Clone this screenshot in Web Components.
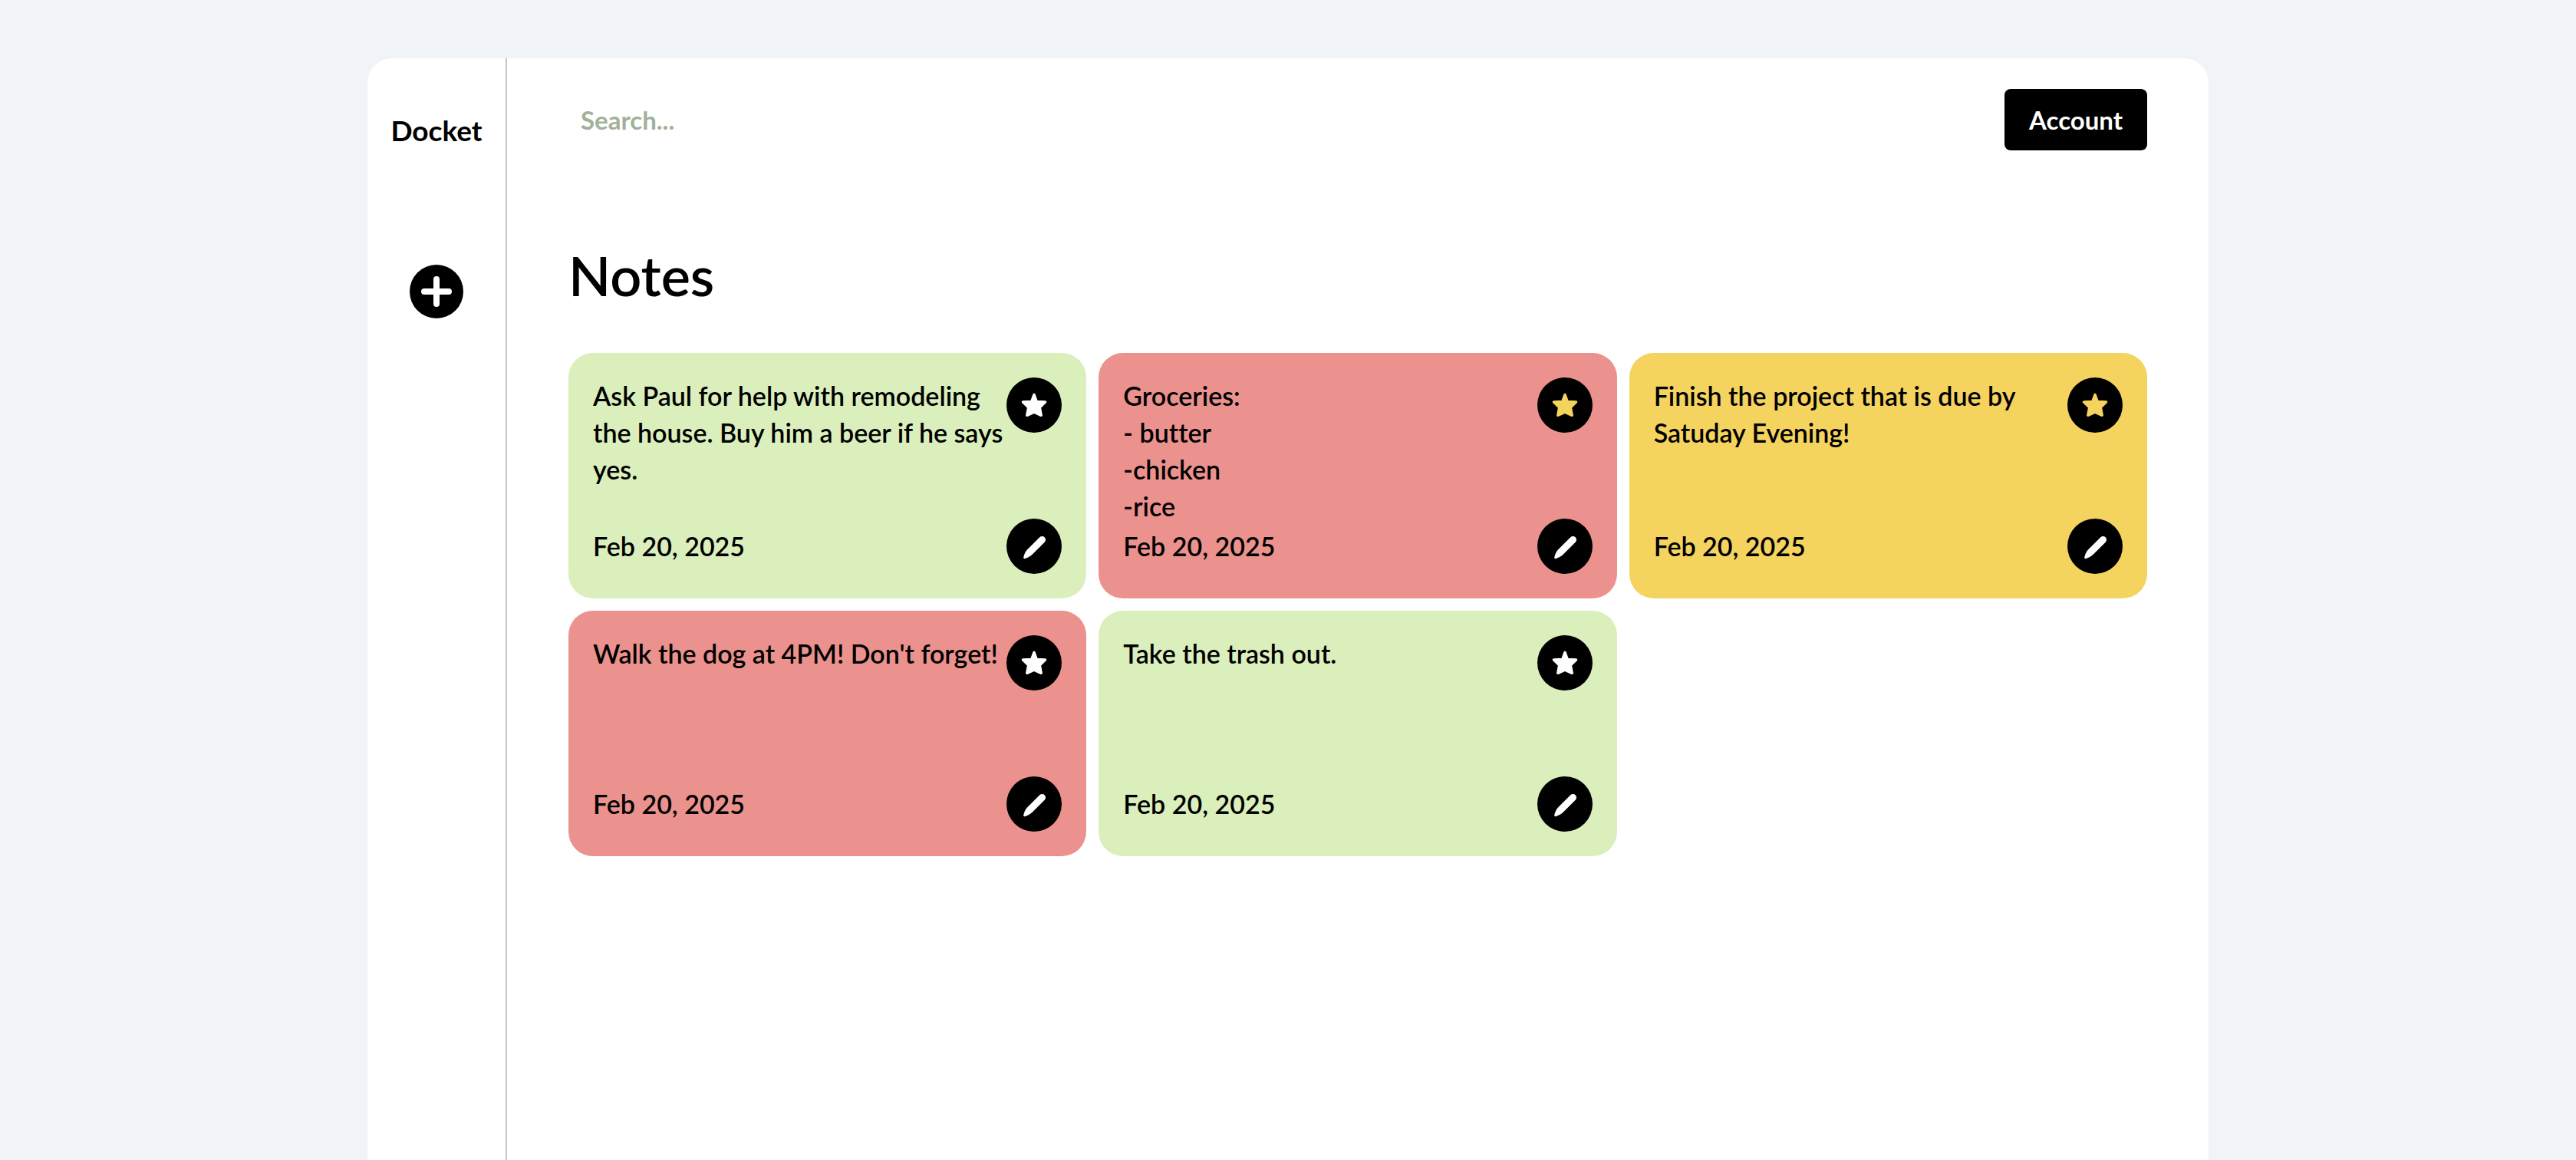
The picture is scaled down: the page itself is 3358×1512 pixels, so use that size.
<!DOCTYPE html>
<html lang="en">
<head>
<meta charset="utf-8">
<title>Docket</title>
<style>
  body { margin: 0; background: #f0f4f9; color: #000; font: 600 34px/48px Lato, "Open Sans", sans-serif; font-variant-ligatures: none; }
</style>
</head>
<body>
<docket-app>
  <docket-sidebar slot="sidebar">Docket</docket-sidebar>
  <docket-toolbar slot="toolbar">Account</docket-toolbar>
  <span slot="title">Notes</span>
  <docket-note color="green" date="Feb 20, 2025">Ask Paul for help with remodeling the house. Buy him a beer if he says yes.</docket-note>
  <docket-note color="red" date="Feb 20, 2025" starred>Groceries:
- butter
-chicken
-rice</docket-note>
  <docket-note color="yellow" date="Feb 20, 2025" starred>Finish the project that is due by Satuday Evening!</docket-note>
  <docket-note color="red" date="Feb 20, 2025">Walk the dog at 4PM! Don't forget!</docket-note>
  <docket-note color="green" date="Feb 20, 2025">Take the trash out.</docket-note>
</docket-app>

<script>
class DocketElement extends HTMLElement {
  constructor() {
    super();
    this.attachShadow({ mode: "open" }).innerHTML = this.constructor.markup;
  }
}

customElements.define("docket-app", class extends DocketElement {
  static markup = `
    <style>
      :host { display: flex; justify-content: center; padding-top: 76px; }
      .panel { display: flex; flex: 0 1 2400px; min-width: 0; min-height: calc(100vh - 76px); background: #fff; border-radius: 32px 32px 0 0; }
      main { flex: 1; min-width: 0; padding: 40px 80px 80px; }
      h1 { margin: 108px 0 48px; font-size: 72px; line-height: 108px; font-weight: 600; }
      .notes { display: grid; grid-template-columns: repeat(3, minmax(0, 1fr)); gap: 16px; }
    </style>
    <div class="panel">
      <slot name="sidebar"></slot>
      <main>
        <slot name="toolbar"></slot>
        <h1><slot name="title"></slot></h1>
        <section class="notes"><slot></slot></section>
      </main>
    </div>`;
});

customElements.define("docket-sidebar", class extends DocketElement {
  static markup = `
    <style>
      :host { display: flex; flex-direction: column; align-items: center; gap: 145px; box-sizing: border-box; flex: 0 0 182px; padding-top: 64px; border-right: 2px solid #c6c6c6; }
      .brand { font-size: 37px; line-height: 60px; font-weight: 700; }
      button { display: block; padding: 0; border: 0; background: none; cursor: pointer; }
      svg { display: block; width: 70px; height: 70px; }
    </style>
    <div class="brand"><slot></slot></div>
    <button type="button" aria-label="Add note">
      <svg viewBox="0 0 70 70"><circle cx="35" cy="35" r="35"/><path d="M35 19v32M19 35h32" stroke="#fff" stroke-width="8" stroke-linecap="round"/></svg>
    </button>`;
});

customElements.define("docket-toolbar", class extends DocketElement {
  static markup = `
    <style>
      :host { display: flex; justify-content: space-between; align-items: center; gap: 32px; font-size: 33px; font-weight: 700; }
      input { flex: 1; min-width: 0; height: 80px; box-sizing: border-box; padding: 0 16px; border: 0; outline: 0; background: none; font: inherit; color: #000; }
      input::placeholder { color: #a3b09a; opacity: 1; }
      button { height: 80px; padding: 0 32px; border: 0; border-radius: 8px; background: #000; color: #fff; font: inherit; cursor: pointer; }
    </style>
    <input type="search" aria-label="Search notes" placeholder="Search...">
    <button type="button"><slot></slot></button>`;
});

customElements.define("docket-note", class extends DocketElement {
  static markup = `
    <style>
      :host { display: flex; flex-direction: column; justify-content: space-between; box-sizing: border-box; min-height: 320px; padding: 32px; border-radius: 32px; background: #dbefbc; }
      :host([color="red"]) { background: #ec928e; }
      :host([color="yellow"]) { background: #f5d35f; }
      .row { display: flex; justify-content: space-between; align-items: flex-start; }
      .head { height: 184px; }
      .foot { align-items: center; }
      p { flex: 1; margin: 0 -8px 0 0; white-space: pre-wrap; }
      button { flex: none; width: 72px; height: 72px; padding: 0; border: 0; border-radius: 50%; background: #000; color: #fff; cursor: pointer; }
      :host([starred]) .star { color: #f5d35f; }
      svg { display: block; width: 72px; height: 72px; fill: currentColor; }
    </style>
    <div class="row head">
      <p><slot></slot></p>
      <button class="star" type="button" aria-label="Star note">
        <svg viewBox="0 0 72 72"><path d="M36 22.500L39.300 31.500L50.500 32L43.300 39L45.200 49.300L36 45.200L26.800 49.300L28.700 39L21.500 32L32.700 31.500Z" stroke="currentColor" stroke-width="3.500" stroke-linejoin="round"/></svg>
      </button>
    </div>
    <div class="row foot">
      <time></time>
      <button type="button" aria-label="Edit note">
        <svg viewBox="0 0 72 72"><path d="M43.300 24.300a4.500 4.500 0 0 1 6.400 6.400L33.400 47c-2.500 2.300-5.800 4-9.600 5.200a1.300 1.300 0 0 1-1.600-1.600c.8-3.600 2-6.600 4.300-9.500z"/></svg>
      </button>
    </div>`;
  connectedCallback() {
    this.shadowRoot.querySelector("time").textContent = this.getAttribute("date");
  }
});
</script>
</body>
</html>
